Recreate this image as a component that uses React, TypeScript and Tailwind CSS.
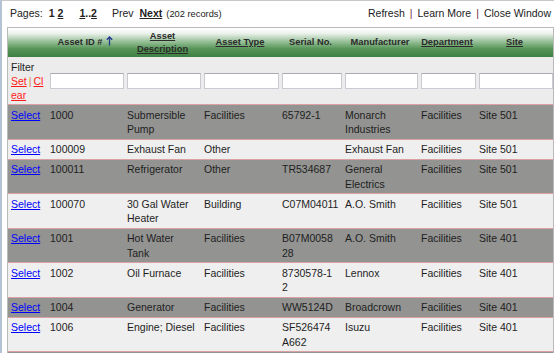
import React from "react";

interface AssetRow {
  id: string;
  desc: string[];
  type: string;
  serial: string[];
  mfr: string[];
  dept: string;
  site: string;
  dark: boolean;
}

// asset records shown on page 1
const rows: AssetRow[] = [
  { id: "1000", desc: ["Submersible", "Pump"], type: "Facilities", serial: ["65792-1"], mfr: ["Monarch", "Industries"], dept: "Facilities", site: "Site 501", dark: true },
  { id: "100009", desc: ["Exhaust Fan"], type: "Other", serial: [], mfr: ["Exhaust Fan"], dept: "Facilities", site: "Site 501", dark: false },
  { id: "100011", desc: ["Refrigerator"], type: "Other", serial: ["TR534687"], mfr: ["General", "Electrics"], dept: "Facilities", site: "Site 501", dark: true },
  { id: "100070", desc: ["30 Gal Water", "Heater"], type: "Building", serial: ["C07M04011"], mfr: ["A.O. Smith"], dept: "Facilities", site: "Site 501", dark: false },
  { id: "1001", desc: ["Hot Water", "Tank"], type: "Facilities", serial: ["B07M0058", "28"], mfr: ["A.O. Smith"], dept: "Facilities", site: "Site 401", dark: true },
  { id: "1002", desc: ["Oil Furnace"], type: "Facilities", serial: ["8730578-1", "2"], mfr: ["Lennox"], dept: "Facilities", site: "Site 401", dark: false },
  { id: "1004", desc: ["Generator"], type: "Facilities", serial: ["WW5124D"], mfr: ["Broadcrown"], dept: "Facilities", site: "Site 401", dark: true },
  { id: "1006", desc: ["Engine; Diesel"], type: "Facilities", serial: ["SF526474", "A662"], mfr: ["Isuzu"], dept: "Facilities", site: "Site 401", dark: false },
];

const cols = "grid grid-cols-[39px_77px_77px_78px_63px_76px_58px_77px]";

function Lines({ lines }: { lines: string[] }) {
  return (
    <>
      {lines.map((l, i) => (
        <div key={i} className="whitespace-nowrap">
          {l}
        </div>
      ))}
    </>
  );
}

function SortArrow() {
  return (
    <svg width="7" height="10" viewBox="0 0 7 10" className="inline-block ml-[4px] -mt-[3px] align-middle">
      <path d="M3.5 1 L3.5 9.5 M0.8 3.8 L3.5 1 L6.2 3.8" stroke="#1f3a8f" strokeWidth="1.3" fill="none" />
    </svg>
  );
}

export default function App() {
  const cell = "pl-[3px] pt-[2.5px] pb-[2px] leading-[14.5px]";
  return (
    <div className="h-[353px] w-[554px] overflow-hidden bg-white border-t border-[#c9c9c9] border-l-2 border-l-[#b3c2d4] pl-[5px] font-['Liberation_Sans',Arial,sans-serif] text-[10.5px] text-[#1e1e1e]">
      {/* pager + links */}
      <div className="flex items-center justify-between h-[26px] pl-[3px] pr-[3px] text-[#222]">
        <div className="flex items-baseline">
          <span>Pages:</span>
          <span className="ml-[6px] font-bold">1</span>
          <span className="ml-[3px] font-bold underline">2</span>
          <span className="ml-[16px] font-bold">
            <span className="underline">1</span>..<span className="underline">2</span>
          </span>
          <span className="ml-[15px]">Prev</span>
          <span className="ml-[6px] font-bold underline">Next</span>
          <span className="ml-[4px] text-[9.3px]">(202 records)</span>
        </div>
        <div className="flex items-baseline">
          <span>Refresh</span>
          <span className="mx-[5px] text-[#7a1f3a]">|</span>
          <span>Learn More</span>
          <span className="mx-[5px] text-[#7a1f3a]">|</span>
          <span>Close Window</span>
        </div>
      </div>

      {/* grid */}
      <div className="border-t border-l border-r border-[#b9b9b9]">
        <div className={`${cols} h-[29px] items-center bg-[linear-gradient(to_bottom,#ffffff_0%,#eef3ee_18%,#9cc39d_45%,#559556_72%,#3e8044_100%)] text-center font-bold text-[9.3px] leading-[13px] text-[#2b2b2b]`}>
          <div />
          <div>
            Asset ID #<SortArrow />
          </div>
          <div className="underline">
            Asset
            <br />
            Description
          </div>
          <div className="underline">Asset Type</div>
          <div>Serial No.</div>
          <div>Manufacturer</div>
          <div className="underline">Department</div>
          <div className="underline">Site</div>
        </div>

        <div className={`${cols} bg-[#ececec] border-b border-[#d9a1a4]`}>
          <div className="pl-[3px] pt-[3px] pb-[2px] leading-[14px]">
            <div>Filter</div>
            <div>
              <span className="text-[#ff1a1a] underline">Set</span>
              <span className="mx-[2px] text-[#d9822b]">|</span>
              <span className="text-[#ff1a1a] underline">Cl</span>
            </div>
            <div className="text-[#ff1a1a] underline">ear</div>
          </div>
          {[0, 1, 2, 3, 4, 5, 6].map((i) => (
            <div key={i} className="flex items-center pl-[3px]">
              <input
                type="text"
                className="block w-full h-[16px] bg-white border border-[#cacad2] border-t-[#a9a9b2] outline-none"
              />
            </div>
          ))}
        </div>

        {rows.map((r) => (
          <div
            key={r.id}
            className={`${cols} border-b border-[#d9a1a4] ${r.dark ? "bg-[#939391]" : "bg-[#efefef]"}`}
          >
            <div className={cell}>
              <span className="text-[#0000ff] underline">Select</span>
            </div>
            <div className={cell}>{r.id}</div>
            <div className={cell}>
              <Lines lines={r.desc} />
            </div>
            <div className={cell}>{r.type}</div>
            <div className={cell}>
              <Lines lines={r.serial} />
            </div>
            <div className={cell}>
              <Lines lines={r.mfr} />
            </div>
            <div className={cell}>{r.dept}</div>
            <div className={cell}>{r.site}</div>
          </div>
        ))}
        <div className="h-[6px] bg-[#939391]" />
      </div>
    </div>
  );
}
